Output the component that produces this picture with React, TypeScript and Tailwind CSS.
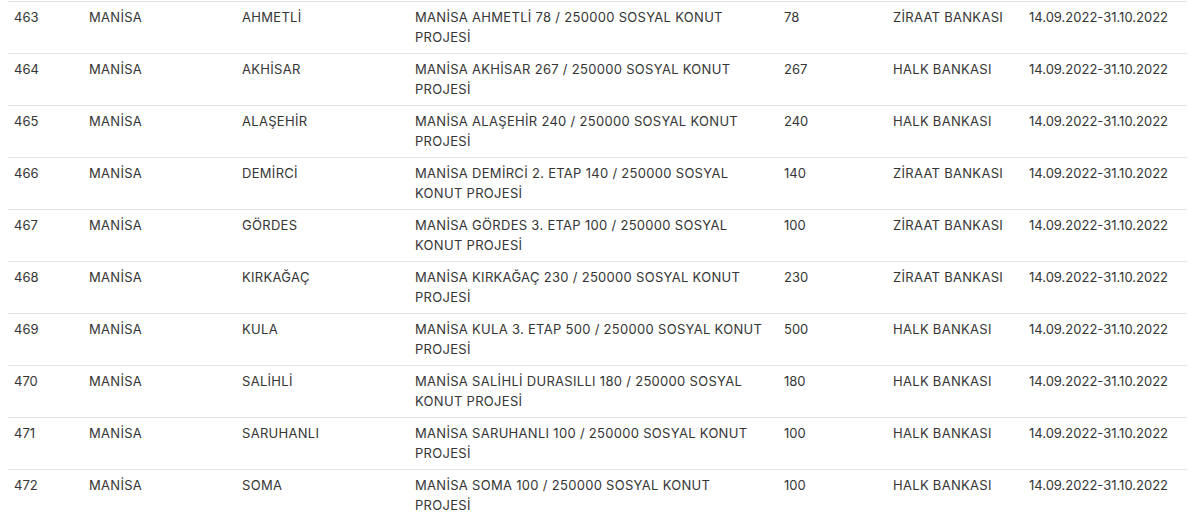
import React from 'react';

type Row = {
    no: number;
    il: string;
    ilce: string;
    proje: string;
    adet: number;
    banka: string;
    tarih: string;
};

const rows: Row[] = [
    { no: 463, il: 'MANİSA', ilce: 'AHMETLİ', proje: 'MANİSA AHMETLİ 78 / 250000 SOSYAL KONUT PROJESİ', adet: 78, banka: 'ZİRAAT BANKASI', tarih: '14.09.2022-31.10.2022' },
    { no: 464, il: 'MANİSA', ilce: 'AKHİSAR', proje: 'MANİSA AKHİSAR 267 / 250000 SOSYAL KONUT PROJESİ', adet: 267, banka: 'HALK BANKASI', tarih: '14.09.2022-31.10.2022' },
    { no: 465, il: 'MANİSA', ilce: 'ALAŞEHİR', proje: 'MANİSA ALAŞEHİR 240 / 250000 SOSYAL KONUT PROJESİ', adet: 240, banka: 'HALK BANKASI', tarih: '14.09.2022-31.10.2022' },
    { no: 466, il: 'MANİSA', ilce: 'DEMİRCİ', proje: 'MANİSA DEMİRCİ 2. ETAP 140 / 250000 SOSYAL KONUT PROJESİ', adet: 140, banka: 'ZİRAAT BANKASI', tarih: '14.09.2022-31.10.2022' },
    { no: 467, il: 'MANİSA', ilce: 'GÖRDES', proje: 'MANİSA GÖRDES 3. ETAP 100 / 250000 SOSYAL KONUT PROJESİ', adet: 100, banka: 'ZİRAAT BANKASI', tarih: '14.09.2022-31.10.2022' },
    { no: 468, il: 'MANİSA', ilce: 'KIRKAĞAÇ', proje: 'MANİSA KIRKAĞAÇ 230 / 250000 SOSYAL KONUT PROJESİ', adet: 230, banka: 'ZİRAAT BANKASI', tarih: '14.09.2022-31.10.2022' },
    { no: 469, il: 'MANİSA', ilce: 'KULA', proje: 'MANİSA KULA 3. ETAP 500 / 250000 SOSYAL KONUT PROJESİ', adet: 500, banka: 'HALK BANKASI', tarih: '14.09.2022-31.10.2022' },
    { no: 470, il: 'MANİSA', ilce: 'SALİHLİ', proje: 'MANİSA SALİHLİ DURASILLI 180 / 250000 SOSYAL KONUT PROJESİ', adet: 180, banka: 'HALK BANKASI', tarih: '14.09.2022-31.10.2022' },
    { no: 471, il: 'MANİSA', ilce: 'SARUHANLI', proje: 'MANİSA SARUHANLI 100 / 250000 SOSYAL KONUT PROJESİ', adet: 100, banka: 'HALK BANKASI', tarih: '14.09.2022-31.10.2022' },
    { no: 472, il: 'MANİSA', ilce: 'SOMA', proje: 'MANİSA SOMA 100 / 250000 SOSYAL KONUT PROJESİ', adet: 100, banka: 'HALK BANKASI', tarih: '14.09.2022-31.10.2022' },
];

const cell = 'align-top px-[6px] pt-[5px] pb-[6px]';

const App = () => {
    return (
        <div className="bg-white w-[1195px] h-[521px] overflow-hidden px-[8px] pt-[1px]">
            <table
                className="w-[1179px] table-fixed border-collapse text-[13px] leading-[20px] tracking-[0.3px] text-[#353535]"
                style={{ fontFamily: 'Inter, "Noto Sans", sans-serif' }}
            >
                <colgroup>
                    <col className="w-[75px]" />
                    <col className="w-[153px]" />
                    <col className="w-[173px]" />
                    <col className="w-[369px]" />
                    <col className="w-[109px]" />
                    <col className="w-[136px]" />
                    <col className="w-[164px]" />
                </colgroup>
                <tbody>
                    {rows.map(r => (
                        <tr key={r.no} className="border-t border-[#e4e4e4]">
                            <td className={cell + ' tracking-normal'}>{r.no}</td>
                            <td className={cell}>{r.il}</td>
                            <td className={cell}>{r.ilce}</td>
                            <td className={cell + ' pr-[12px]'}>{r.proje}</td>
                            <td className={cell + ' tracking-normal'}>{r.adet}</td>
                            <td className={cell}>{r.banka}</td>
                            <td className={cell + ' whitespace-nowrap tracking-normal'}>{r.tarih}</td>
                        </tr>
                    ))}
                </tbody>
            </table>
        </div>
    );
};

export default App;
